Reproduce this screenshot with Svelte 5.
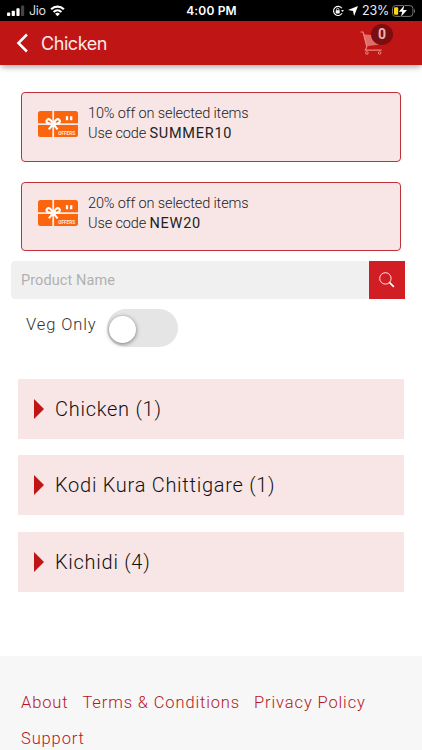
<script lang="ts">
  type Offer = { text: string; code: string };

  const offers: Offer[] = [
    { text: '10% off on selected items', code: 'SUMMER10' },
    { text: '20% off on selected items', code: 'NEW20' }
  ];

  const categories = [
    { name: 'Chicken', count: 1 },
    { name: 'Kodi Kura Chittigare', count: 1 },
    { name: 'Kichidi', count: 4 }
  ];

  const links = ['About', 'Terms & Conditions', 'Privacy Policy', 'Support'];

  let search = $state('');
  let vegOnly = $state(false);
  let cartCount = $state(0);
</script>

<div class="screen">
  <div class="status">
    <div class="status-side">
      <svg class="signal" width="18" height="12" viewBox="0 0 18 12">
        <rect x="0" y="7.5" width="3.2" height="3.5" rx="0.8" fill="#fff" />
        <rect x="4.7" y="5.8" width="3.2" height="5.2" rx="0.8" fill="#fff" />
        <rect x="9.4" y="3.3" width="3.2" height="7.7" rx="0.8" fill="#fff" />
        <rect x="14" y="0.5" width="3.2" height="10.5" rx="0.8" fill="#444" />
      </svg>
      <span class="carrier">Jio</span>
      <svg class="wifi" width="15" height="12" viewBox="0 0 16 12">
        <path d="M1.2 4.2a9.8 9.8 0 0 1 13.6 0" fill="none" stroke="#fff" stroke-width="2.4" />
        <path d="M3.8 7a6.1 6.1 0 0 1 8.4 0" fill="none" stroke="#fff" stroke-width="2.2" />
        <path d="M8 11.6 5.4 9a3.8 3.8 0 0 1 5.2 0Z" fill="#fff" />
      </svg>
    </div>
    <span class="time">4:00 PM</span>
    <div class="status-side right">
      <svg width="12" height="12" viewBox="0 0 12 12" fill="none" stroke="#fff">
        <path d="M9.9 3.3a4.6 4.6 0 1 0 .2 5" stroke-width="1.1" />
        <path d="m8.9 5.3 1.8 1.8 1.2-2Z" fill="#fff" stroke="none" />
        <rect x="3.7" y="5.2" width="4" height="3.2" rx="0.4" fill="#fff" stroke="none" />
        <path d="M4.5 5.4V4.5a1.2 1.2 0 0 1 2.4 0v.9" stroke-width="0.8" />
      </svg>
      <svg class="location" width="10" height="10" viewBox="0 0 10 10">
        <path d="M10 0 6.1 10 5 5 0 4.1Z" fill="#fff" />
      </svg>
      <span class="percent">23%</span>
      <svg class="battery" width="24" height="12" viewBox="0 0 24 12">
        <rect x="0.5" y="0.6" width="20.4" height="10.8" rx="3" fill="none" stroke="#777" />
        <rect x="2" y="2.2" width="4.2" height="7.6" rx="1" fill="#ffd60a" />
        <path d="M22 4v4c1.3-.3 1.3-3.7 0-4Z" fill="#777" />
        <path d="M12.4.3 6.8 6.8h3.4L9 11.8l6-6.8h-3.8Z" fill="#fff" stroke="#000" stroke-width="0.7" paint-order="stroke" />
      </svg>
    </div>
  </div>

  <header>
    <svg class="back" width="12" height="20" viewBox="0 0 12 20">
      <path d="M10.9 1.5 2.4 10l8.5 8.5" fill="none" stroke="#fff" stroke-width="2.5" />
    </svg>
    <h1>Chicken</h1>
    <div class="cart">
      <svg width="25" height="25" viewBox="0 0 25 25" fill="none" stroke="#eb8581">
        <path d="M3.4 3.2 22.5 5.2 22 13.2 6.5 15.3Z" fill="#e16d6b" stroke="none" />
        <path d="M.6 1h2.5l3.7 14.6-1.4 3.5h16.2" stroke-width="1.2" />
        <circle cx="6.9" cy="22" r="1.3" />
        <circle cx="19.6" cy="22" r="1.3" />
      </svg>
      <span class="badge">{cartCount}</span>
    </div>
  </header>

  <main>
    <section class="offers">
      {#each offers as offer}
        <div class="offer">
          <svg class="gift" width="40" height="26" viewBox="0 0 40 26">
            <rect width="40" height="26" rx="2.5" fill="#fa650d" />
            <path d="M15.2 0v26M0 13.1h40" stroke="#fbe9e6" stroke-width="1.8" />
            <g fill="none" stroke="#fff" stroke-width="2.1">
              <path d="M15.2 13.1c-1.6-4-4.2-6.1-6.2-4.2-2 2 1.5 4.4 6.2 4.2Z" />
              <path d="M15.2 13.1c1.6-4 4.2-6.1 6.2-4.2 2 2-1.5 4.4-6.2 4.2Z" />
              <path d="m15.2 13.1-4.4 5.3M15.2 13.1l4.4 5.3" />
            </g>
            <circle cx="15.2" cy="13.1" r="2.8" fill="#fff" />
            <path d="M29 5.2v4M33.2 5.2v4" stroke="#fff" stroke-width="2.3" />
            <text x="20.2" y="23.6" textLength="17" lengthAdjust="spacingAndGlyphs">OFFERS</text>
          </svg>
          <div class="offer-text">
            <p>{offer.text}</p>
            <p>Use code <span class="code">{offer.code}</span></p>
          </div>
        </div>
      {/each}
    </section>

    <div class="search">
      <input type="text" placeholder="Product Name" bind:value={search} />
      <button aria-label="Search">
        <svg width="16" height="16" viewBox="0 0 16 16" fill="none" stroke="#fff">
          <circle cx="6.4" cy="6.4" r="5.7" stroke-width="0.9" />
          <path d="m10.4 10.4 4.5 4.5" stroke-width="1.6" />
        </svg>
      </button>
    </div>

    <label class="veg">
      <span>Veg Only</span>
      <input type="checkbox" bind:checked={vegOnly} />
      <i class="switch"></i>
    </label>

    <section class="categories">
      {#each categories as category}
        <div class="category">
          <i class="arrow"></i>
          <span>{category.name} ({category.count})</span>
        </div>
      {/each}
    </section>
  </main>

  <footer>
    {#each links as link}
      <a href="#top">{link}</a>
    {/each}
  </footer>
</div>

<style>
  :global(body) {
    margin: 0;
    overflow: hidden;
  }

  .screen {
    display: flex;
    flex-direction: column;
    width: 422px;
    height: 750px;
    overflow: hidden;
    background: #fff;
    font-family: Roboto, sans-serif;
    color: #333;
  }

  .status {
    display: grid;
    grid-template-columns: 1fr auto 1fr;
    align-items: center;
    flex: none;
    box-sizing: border-box;
    height: 21px;
    padding: 1px 6px 0 7px;
    background: #000;
    color: #fff;
    font: 12.5px/20px Inter, sans-serif;
  }

  .status-side {
    display: flex;
    align-items: center;
  }

  .right {
    justify-content: flex-end;
  }

  .carrier {
    margin: 0 4px 0 4px;
    font-size: 12.5px;
    letter-spacing: -0.3px;
    color: #ddd;
  }

  .time {
    font-size: 12px;
    font-weight: 600;
    letter-spacing: 0.15px;
  }

  .location {
    margin: 0 4px 0 4px;
  }

  .percent {
    margin-right: 3px;
    font-size: 12.5px;
    letter-spacing: -0.2px;
    color: #eee;
  }

  header {
    position: relative;
    display: flex;
    align-items: center;
    flex: none;
    box-sizing: border-box;
    height: 44px;
    padding: 0 26px 0 16px;
    background: #c01515;
    box-shadow: 0 3px 6px -1px rgba(0, 0, 0, 0.35);
    color: #fff;
  }

  .back {
    margin-top: -1px;
  }

  h1 {
    margin: 2px 0 0 13px;
    font: 400 18px/24px Inter, sans-serif;
    letter-spacing: -0.45px;
    color: #fbe8e8;
  }

  .cart {
    position: relative;
    width: 36px;
    height: 25px;
    margin-left: auto;
  }

  .badge {
    position: absolute;
    top: -7px;
    left: 11px;
    width: 22px;
    height: 21px;
    border-radius: 50%;
    background: #7c0e11;
    color: #eab4b4;
    font: 700 14px/21px Roboto, sans-serif;
    text-align: center;
  }

  main {
    flex: 1;
  }

  .offers {
    display: flex;
    flex-direction: column;
    gap: 20px;
    padding: 27px 21px 0;
  }

  .offer {
    display: flex;
    box-sizing: border-box;
    height: 69.5px;
    padding: 11px 0 0 15.5px;
    border: 1px solid #c03039;
    border-radius: 4px;
    background: #f8e6e6;
  }

  .gift {
    margin-top: 6.5px;
  }

  .gift text {
    fill: #ffe9dc;
    font: 700 4.8px Roboto, sans-serif;
  }

  .offer-text {
    margin-left: 10.5px;
    font-size: 14.5px;
    font-weight: 300;
    line-height: 20px;
    letter-spacing: -0.13px;
    color: #222;
  }

  .offer-text p {
    margin: 0;
  }

  .code {
    font-weight: 400;
    letter-spacing: 0.75px;
    color: #222;
  }

  .search {
    display: flex;
    height: 38px;
    margin: 10px 17.5px 0 11px;
  }

  .search input {
    flex: 1;
    min-width: 0;
    padding: 0 10px;
    border: 0;
    border-radius: 4px;
    background: #f0f0f0;
    font: 14.5px Roboto, sans-serif;
    letter-spacing: 0.1px;
  }

  .search input::placeholder {
    color: #b0b0b0;
  }

  .search button {
    display: flex;
    align-items: center;
    justify-content: center;
    width: 36px;
    padding: 0;
    border: 0;
    background: #d01e24;
  }

  .veg {
    display: flex;
    margin: 10px 0 0 26px;
    font-size: 16.5px;
    font-weight: 300;
    line-height: 31px;
    letter-spacing: 0.9px;
    color: #333;
  }

  .veg span {
    width: 81px;
  }

  .veg input {
    display: none;
  }

  .switch {
    box-sizing: border-box;
    width: 71px;
    height: 38px;
    padding: 7px 1.5px;
    border-radius: 19px;
    background: #e5e5e5;
  }

  .switch::before {
    content: '';
    display: block;
    width: 27px;
    height: 27px;
    border-radius: 50%;
    background: #fff;
    box-shadow: 0 1px 4px rgba(0, 0, 0, 0.5);
  }

  input:checked + .switch::before {
    margin-left: auto;
  }

  .categories {
    display: flex;
    flex-direction: column;
    gap: 16.4px;
    margin: 32px 18px 0;
  }

  .category {
    display: flex;
    align-items: center;
    height: 60px;
    padding-left: 16px;
    background: #f8e6e6;
    font-size: 20px;
    font-weight: 300;
    letter-spacing: 0.73px;
    color: #111;
  }

  .arrow {
    margin-right: 11px;
    border: solid transparent;
    border-width: 10px 0 10px 10px;
    border-left-color: #c01515;
  }

  footer {
    display: flex;
    flex: none;
    flex-wrap: wrap;
    align-content: flex-start;
    column-gap: 14px;
    box-sizing: border-box;
    height: 94px;
    padding: 29px 21px 0;
    background: #f7f7f7;
  }

  footer a {
    color: #b5161b;
    font-size: 16.5px;
    font-weight: 300;
    line-height: 35.5px;
    letter-spacing: 0.87px;
    text-decoration: none;
  }
</style>
